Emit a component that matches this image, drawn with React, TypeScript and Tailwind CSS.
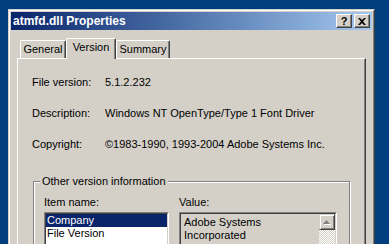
import React from 'react';

const FONT = { fontFamily: '"Liberation Sans", Arial, sans-serif' };

// raised 3d button, classic style
const TitleButton = ({ children }: { children: React.ReactNode }) => (
  <div className="w-[16px] h-[14px] border-t border-l border-white border-r border-b border-r-[#404040] border-b-[#404040] bg-[#d4d0c8]">
    <div className="w-full h-full shadow-[inset_-1px_-1px_0_#808080] flex items-center justify-center">
      {children}
    </div>
  </div>
);

const Tab = ({ label, width, selected }: { label: string; width: string; selected?: boolean }) => (
  <div
    className={
      selected
        ? `${width} h-[21px] -mb-px relative z-10 bg-[#d4d0c8] border-t border-l border-white border-r border-r-[#404040] rounded-tl-[2px] rounded-tr-[2px] shadow-[inset_-1px_0_0_#808080] flex justify-center pt-[2px]`
        : `${width} h-[18px] bg-[#d4d0c8] border-t border-l border-white border-r border-r-[#404040] rounded-tl-[2px] rounded-tr-[2px] shadow-[inset_-1px_0_0_#808080] flex justify-center pt-[2px]`
    }
  >
    <span className="text-[11px] leading-[13px] text-black">{label}</span>
  </div>
);

const InfoRow = ({ label, value }: { label: string; value: string }) => (
  <div className="grid grid-cols-[73px_1fr] text-[11px] leading-[13px] text-black whitespace-nowrap">
    <span>{label}</span>
    <span>{value}</span>
  </div>
);

export default function App() {
  return (
    <div style={FONT} className="w-[389px] h-[244px] overflow-hidden bg-[#003e80] pt-[9px] pl-[8px]">
      {/* window frame */}
      <div className="w-[367px] h-[300px] border-t border-l border-[#d4d0c8] border-r border-b border-r-[#404040] border-b-[#404040]">
        <div className="h-full border-t border-l border-white border-r border-b border-r-[#808080] border-b-[#808080] bg-[#d4d0c8] p-px">
          {/* title bar */}
          <div className="h-[18px] bg-gradient-to-r from-[#0a246a] to-[#a6caf0] flex items-center justify-between pl-[2px] pr-[2px]">
            <span className="text-white font-bold text-[12px] leading-[14px]">atmfd.dll Properties</span>
            <div className="flex gap-[2px]">
              <TitleButton>
                <span className="text-black font-bold text-[11px] leading-[11px]">?</span>
              </TitleButton>
              <TitleButton>
                <svg width="8" height="7" viewBox="0 0 8 7">
                  <path d="M0 0h2l2 2 2-2h2L5 3.5 8 7H6L4 5 2 7H0l3-3.5z" fill="#000" />
                </svg>
              </TitleButton>
            </div>
          </div>

          {/* tab control */}
          <div className="mt-[8px] ml-[6px] mr-[6px]">
            <div className="flex items-end pl-[3px]">
              <Tab label="General" width="w-[46px]" />
              <Tab label="Version" width="w-[50px]" selected />
              <Tab label="Summary" width="w-[54px]" />
            </div>
            <div className="h-[200px] border-t border-l border-white border-r border-r-[#404040] shadow-[inset_-1px_0_0_#808080] pl-[14px] pr-[15px] pt-[17px]">
              <div className="flex flex-col gap-[18px]">
                <InfoRow label="File version:" value="5.1.2.232" />
                <InfoRow label="Description:" value="Windows NT OpenType/Type 1 Font Driver" />
                <InfoRow label="Copyright:" value="©1983-1990, 1993-2004 Adobe Systems Inc." />
              </div>

              {/* group box */}
              <div className="relative mt-[30px] ml-px h-[120px] border border-[#808080] shadow-[inset_1px_1px_0_#fff,1px_1px_0_#fff] pt-[14px] pl-[10px] pr-[9px]">
                <span className="absolute -top-[7px] left-[6px] bg-[#d4d0c8] px-[2px] text-[11px] leading-[13px] text-black">
                  Other version information
                </span>
                <div className="flex gap-[10px]">
                  <div className="w-[125px]">
                    <div className="text-[11px] leading-[13px] text-black">Item name:</div>
                    <div className="mt-[3px] h-[60px] bg-white border-t border-l border-[#808080] border-r border-b border-r-white border-b-white">
                      <div className="h-full border-t border-l border-[#404040] border-r border-b border-r-[#d4d0c8] border-b-[#d4d0c8] text-[11px] leading-[13px]">
                        <div className="bg-[#0a246a] text-white pl-[1px]">Company</div>
                        <div className="text-black pl-[1px]">File Version</div>
                      </div>
                    </div>
                  </div>
                  <div className="w-[158px]">
                    <div className="text-[11px] leading-[13px] text-black">Value:</div>
                    <div className="mt-[3px] h-[60px] bg-[#d4d0c8] border-t border-l border-[#808080] border-r border-b border-r-white border-b-white">
                      <div className="h-full flex border-t border-l border-[#404040] border-r border-b border-r-[#d4d0c8] border-b-[#d4d0c8]">
                        <div className="flex-1 pl-[3px] pt-[2px] text-[11px] leading-[13px] text-black">
                          <div>Adobe Systems</div>
                          <div>Incorporated</div>
                        </div>
                        <div className="w-[16px] flex flex-col">
                          <div className="h-[16px] border-t border-l border-[#d4d0c8] border-r border-b border-r-[#404040] border-b-[#404040] bg-[#d4d0c8]">
                            <div className="w-full h-full shadow-[inset_1px_1px_0_#fff,inset_-1px_-1px_0_#808080] flex items-center justify-center">
                              <svg width="8" height="5" viewBox="0 0 8 5">
                                <path d="M1 5h7L4.5 1z" fill="#fff" />
                                <path d="M0 4h7L3.5 0z" fill="#808080" />
                              </svg>
                            </div>
                          </div>
                          <div className="flex-1 bg-[repeating-conic-gradient(#ffffff_0_25%,#d4d0c8_0_50%)] bg-[length:2px_2px]" />
                        </div>
                      </div>
                    </div>
                  </div>
                </div>
              </div>
            </div>
          </div>
        </div>
      </div>
    </div>
  );
}
